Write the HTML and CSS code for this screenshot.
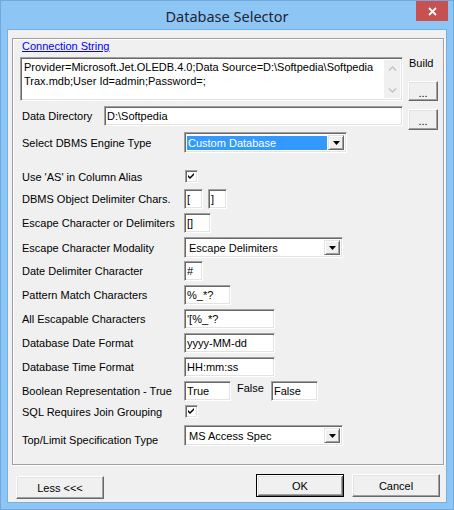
FILE: index.html
```html
<!DOCTYPE html>
<html>
<head>
<meta charset="utf-8">
<title>Database Selector</title>
<link rel="stylesheet" href="styles.css">
</head>
<body>
<div class="window">
  <div class="titlebar">
    <span class="title">Database Selector</span>
    <div class="close">
      <svg width="9" height="9" viewBox="0 0 9 9"><path d="M1 1 L8 8 M8 1 L1 8" stroke="#fff" stroke-width="1.8" fill="none"/></svg>
    </div>
  </div>
  <div class="client">
    <div class="group">
      <a class="link" href="#">Connection String</a>
      <div class="conn-row">
        <div class="field textarea">
          <div class="ta-text">Provider=Microsoft.Jet.OLEDB.4.0;Data Source=D:\Softpedia\Softpedia Trax.mdb;User Id=admin;Password=;</div>
          <div class="vscroll">
            <svg width="9" height="5" viewBox="0 0 9 5"><polyline points="1,4.5 4.5,1 8,4.5" fill="none" stroke="#c2c2c2" stroke-width="1.4"/></svg>
            <svg width="9" height="5" viewBox="0 0 9 5"><polyline points="1,0.5 4.5,4 8,0.5" fill="none" stroke="#c2c2c2" stroke-width="1.4"/></svg>
          </div>
        </div>
        <div class="build">
          <span class="build-label">Build</span>
          <button class="btn small">...</button>
        </div>
      </div>

      <div class="row dir-row">
        <span class="label short">Data Directory</span>
        <div class="field input w-dir">D:\Softpedia</div>
        <button class="btn small offset">...</button>
      </div>

      <div class="row combo-row r-dbms">
        <span class="label">Select DBMS Engine Type</span>
        <div class="field combo w-dbms">
          <span class="combo-text selected">Custom Database</span>
          <span class="combo-btn"><svg width="7" height="4" viewBox="0 0 7 4"><polygon points="0,0 7,0 3.5,4" fill="#000"/></svg></span>
        </div>
      </div>

      <div class="row check-row r-as">
        <span class="label">Use 'AS' in Column Alias</span>
        <span class="field check"><svg width="9" height="9" viewBox="0 0 9 9"><polygon points="1,3 3,5 7,1 7,3 3,7 1,5" fill="#000"/></svg></span>
      </div>

      <div class="row r-gap5">
        <span class="label">DBMS Object Delimiter Chars.</span>
        <div class="field input w-19">[</div>
        <div class="field input w-19 ml-5">]</div>
      </div>

      <div class="row r-gap4">
        <span class="label">Escape Character or Delimiters</span>
        <div class="field input w-27">[]</div>
      </div>

      <div class="row combo-row r-gap4">
        <span class="label">Escape Character Modality</span>
        <div class="field combo w-159">
          <span class="combo-text">Escape Delimiters</span>
          <span class="combo-btn"><svg width="7" height="4" viewBox="0 0 7 4"><polygon points="0,0 7,0 3.5,4" fill="#000"/></svg></span>
        </div>
      </div>

      <div class="row r-gap3">
        <span class="label">Date Delimiter Character</span>
        <div class="field input w-19">#</div>
      </div>

      <div class="row r-gap4">
        <span class="label">Pattern Match Characters</span>
        <div class="field input w-47">%_*?</div>
      </div>

      <div class="row r-gap4">
        <span class="label">All Escapable Characters</span>
        <div class="field input w-91">'[%_*?</div>
      </div>

      <div class="row r-gap4">
        <span class="label">Database Date Format</span>
        <div class="field input w-91">yyyy-MM-dd</div>
      </div>

      <div class="row r-gap4">
        <span class="label">Database Time Format</span>
        <div class="field input w-91">HH:mm:ss</div>
      </div>

      <div class="row r-gap4">
        <span class="label">Boolean Representation - True</span>
        <div class="field input w-47">True</div>
        <span class="false-label">False</span>
        <div class="field input w-47">False</div>
      </div>

      <div class="row check-row r-sql">
        <span class="label">SQL Requires Join Grouping</span>
        <span class="field check"><svg width="9" height="9" viewBox="0 0 9 9"><polygon points="1,3 3,5 7,1 7,3 3,7 1,5" fill="#000"/></svg></span>
      </div>

      <div class="row combo-row r-top">
        <span class="label low">Top/Limit Specification Type</span>
        <div class="field combo w-159">
          <span class="combo-text">MS Access Spec</span>
          <span class="combo-btn"><svg width="7" height="4" viewBox="0 0 7 4"><polygon points="0,0 7,0 3.5,4" fill="#000"/></svg></span>
        </div>
      </div>
    </div>

    <div class="footer">
      <button class="btn wide less">Less &lt;&lt;&lt;</button>
      <span class="spacer"></span>
      <button class="btn wide default">OK</button>
      <button class="btn wide">Cancel</button>
    </div>
  </div>
</div>
</body>
</html>
```

FILE: styles.css
```css
* { box-sizing: border-box; }
html, body { margin: 0; padding: 0; }
body {
  width: 454px;
  height: 510px;
  font-family: "Liberation Sans", Arial, sans-serif;
  font-size: 11px;
  color: #000;
  background: #8dc6f5;
}

.window {
  position: relative;
  width: 454px;
  height: 510px;
  background: #8dc6f5;
  border: 1px solid #72a9dc;
  display: flex;
  flex-direction: column;
}

.titlebar {
  height: 28px;
  display: flex;
  align-items: center;
  justify-content: center;
}
.title {
  font-family: "Noto Sans", "Open Sans", sans-serif;
  font-size: 14.5px;
  color: #1e2436;
  margin-top: 1px;
}
.close {
  position: absolute;
  top: 0;
  right: 5px;
  width: 32px;
  height: 20px;
  background: #c75050;
  display: flex;
  align-items: center;
  justify-content: center;
}

.client {
  width: 440px;
  height: 474px;
  margin-left: 6px;
  border: 1px solid #79b0e2;
  background: #f0f0f0;
  display: flex;
  flex-direction: column;
}

.group {
  margin: 8px 2px 0 4px;
  height: 427px;
  border: 1px solid #a0a0a0;
  box-shadow: 1px 1px 0 #fff, inset 1px 1px 0 #fff;
  padding: 0 0 0 7px;
  display: flex;
  flex-direction: column;
}

.link {
  display: block;
  align-self: flex-start;
  margin-top: 1px;
  margin-left: 2px;
  height: 13px;
  line-height: 13px;
  color: #0000ff;
  text-decoration: underline;
}

/* sunken 3D field */
.field {
  border: 1px solid;
  border-color: #a0a0a0 #fff #fff #a0a0a0;
  box-shadow: inset 1px 1px 0 #696969, inset -1px -1px 0 #e3e3e3;
  background: #fff;
}

.conn-row {
  display: flex;
  margin-top: 4px;
  height: 44px;
}
.textarea {
  width: 383px;
  height: 44px;
  display: flex;
  padding: 2px;
}
.ta-text {
  flex: 1;
  padding: 0 0 0 1px;
  line-height: 14px;
}
.vscroll {
  width: 16px;
  background: #f0f0f0;
  display: flex;
  flex-direction: column;
  align-items: center;
  justify-content: space-between;
  padding: 6px 0 5px;
}
.build {
  margin-left: 5px;
  width: 30px;
  display: flex;
  flex-direction: column;
}
.build-label {
  height: 13px;
  line-height: 13px;
  padding-left: 1px;
}

/* raised buttons */
.btn {
  font-family: "Liberation Sans", Arial, sans-serif;
  font-size: 11px;
  color: #000;
  background: #f0f0f0;
  border: 1px solid;
  border-color: #fff #696969 #696969 #fff;
  box-shadow: inset -1px -1px 0 #a0a0a0, inset 1px 1px 0 #e3e3e3;
  padding: 0;
  margin: 0;
  display: flex;
  align-items: center;
  justify-content: center;
}
.small {
  width: 30px;
  height: 20px;
  margin-top: 11px;
  padding-top: 3px;
}
.btn.small.offset {
  margin-top: 3px;
  margin-left: 5px;
  align-self: flex-start;
  height: 21px;
}

.row {
  display: flex;
  align-items: center;
  height: 20px;
  flex-shrink: 0;
}
.label {
  width: 164px;
  padding-left: 2px;
  white-space: nowrap;
  flex-shrink: 0;
}
.label.short { width: 84px; }
.label.low { margin-top: 9px; }

.dir-row { margin-top: 5px; }
.r-dbms { margin-top: 6px; }
.r-as { margin-top: 16px; height: 15px; }
.r-gap5 { margin-top: 5px; }
.r-gap4 { margin-top: 4px; }
.r-gap3 { margin-top: 3px; }
.r-sql { margin-top: 3px; height: 15px; }
.r-top { margin-top: 6px; }
.combo-row { height: 21px; }

.input {
  height: 20px;
  padding: 0 0 0 2px;
  line-height: 18px;
  white-space: nowrap;
  overflow: hidden;
}
.w-dir { width: 299px; }
.w-19 { width: 19px; }
.w-27 { width: 27px; }
.w-47 { width: 47px; }
.w-91 { width: 91px; }
.ml-5 { margin-left: 5px; }

.false-label {
  margin: 0 7px 6px 6px;
}

.combo {
  height: 21px;
  display: flex;
  padding: 2px;
}
.w-dbms { width: 163px; }
.w-159 { width: 159px; }
.combo-text {
  flex: 1;
  padding-left: 2px;
  line-height: 17px;
  white-space: nowrap;
}
.combo-text.selected {
  background: #3399ff;
  color: #fff;
  margin: 1px 1px 0 0;
  line-height: 15px;
  padding-left: 1px;
}
.combo-btn {
  width: 16px;
  background: #f0f0f0;
  border: 1px solid;
  border-color: #e3e3e3 #696969 #696969 #e3e3e3;
  box-shadow: inset 1px 1px 0 #fff, inset -1px -1px 0 #a0a0a0;
  display: flex;
  align-items: center;
  justify-content: center;
}

.check {
  width: 13px;
  height: 13px;
  margin-left: 1px;
  padding: 1px;
  display: flex;
}

.footer {
  display: flex;
  align-items: flex-start;
  margin-top: 9px;
  padding: 0 6px 0 8px;
}
.spacer { flex: 1; }
.wide {
  width: 88px;
  height: 23px;
}
.less { margin-top: 2px; }
.default {
  border: 1px solid #000;
  box-shadow: inset 1px 1px 0 #fff, inset -1px -1px 0 #696969, inset 2px 2px 0 #e3e3e3, inset -2px -2px 0 #a0a0a0;
  margin-right: 8px;
}
```
